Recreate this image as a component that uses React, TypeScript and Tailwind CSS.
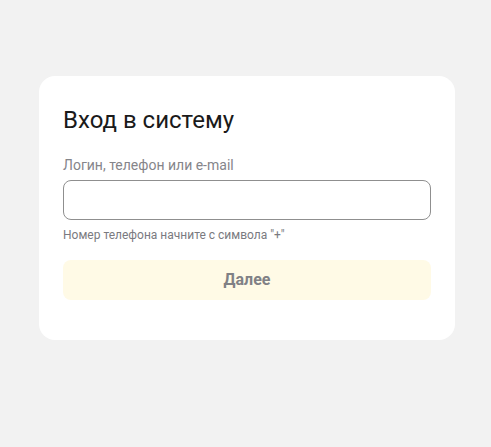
export default function App() {
  return (
    <div
      className="min-h-[447px] w-full bg-[#f2f2f2] pt-[76px] pl-[39px]"
      style={{ fontFamily: "Roboto, 'Liberation Sans', sans-serif" }}
    >
      <div className="w-[416px] rounded-[16px] bg-white px-6 pt-[30px] pb-[40px]">
        <h1 className="text-[24px] leading-[28px] font-normal text-[#1a1a1a]">
          Вход в систему
        </h1>
        <label className="mt-[21px] block text-[14px] leading-[20px] text-[#85858a]">
          Логин, телефон или e-mail
        </label>
        <input
          type="text"
          className="mt-[5px] block h-[40px] w-full rounded-[8px] border border-[#8f8f8f] bg-white px-3 text-[16px] outline-none"
        />
        <p className="mt-[7px] text-[12px] leading-[16px] text-[#7a7a80]">
          Номер телефона начните с символа "+"
        </p>
        <button className="mt-[17px] flex h-[40px] w-full items-center justify-center rounded-[8px] bg-[#fffae6] text-[16px] font-bold text-[#808085]">
          Далее
        </button>
      </div>
    </div>
  );
}
